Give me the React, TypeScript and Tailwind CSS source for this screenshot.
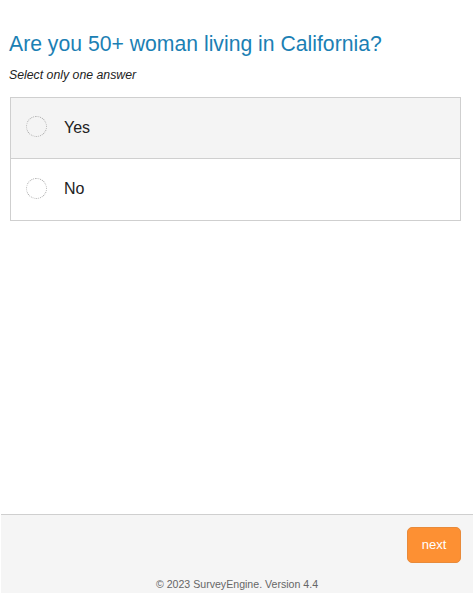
import React, { useState } from "react";

const options = ["Yes", "No"];

const App = () => {
  const [selected, setSelected] = useState<number | null>(null);

  return (
    <div className="flex h-[596px] w-[474px] flex-col bg-white font-['Liberation_Sans',Arial,sans-serif]">
      <div className="flex-1 px-[10px] pt-[30px]">
        <h1 className="ml-[-1px] text-[21.2px] leading-[28px] text-[#1b80b4]">
          Are you 50+ woman living in California?
        </h1>
        <p className="mt-[9px] ml-[-1px] text-[12.3px] italic leading-[16px] text-[#222]">Select only one answer</p>
        <div className="mt-[14px] w-[451px] border border-[#cfcfcf]">
          {options.map((opt, i) => (
            <div
              key={opt}
              onClick={() => setSelected(i)}
              className={`flex h-[61px] cursor-pointer items-center gap-[17px] pb-[3px] pl-[15px] ${
                i === 0 ? "bg-[#f4f4f4] border-b border-[#cfcfcf]" : "bg-white"
              }`}>
              <span className="flex h-[21px] w-[21px] items-center justify-center rounded-full border border-dotted border-[#a8a8a8]">
                {selected === i && <span className="h-[11px] w-[11px] rounded-full bg-[#1b80b4]" />}
              </span>
              <span className="mt-[2px] text-[16px] text-[#222]">{opt}</span>
            </div>
          ))}
        </div>
      </div>
      <div className="mx-[1px] mb-[3px] flex h-[79px] flex-col border-t border-[#cfcfcf] bg-[#f5f5f5] pr-[12px]">
        <div className="flex justify-end pt-[12px]">
          <button className="h-[36px] w-[54px] rounded-[5px] border border-[#e88a3a] bg-[#fd9033] text-[13px] text-white">
            next
          </button>
        </div>
        <p className="mt-[14px] pl-[12px] text-center text-[10.6px] text-[#666]">© 2023 SurveyEngine. Version 4.4</p>
      </div>
    </div>
  );
};

export default App;
